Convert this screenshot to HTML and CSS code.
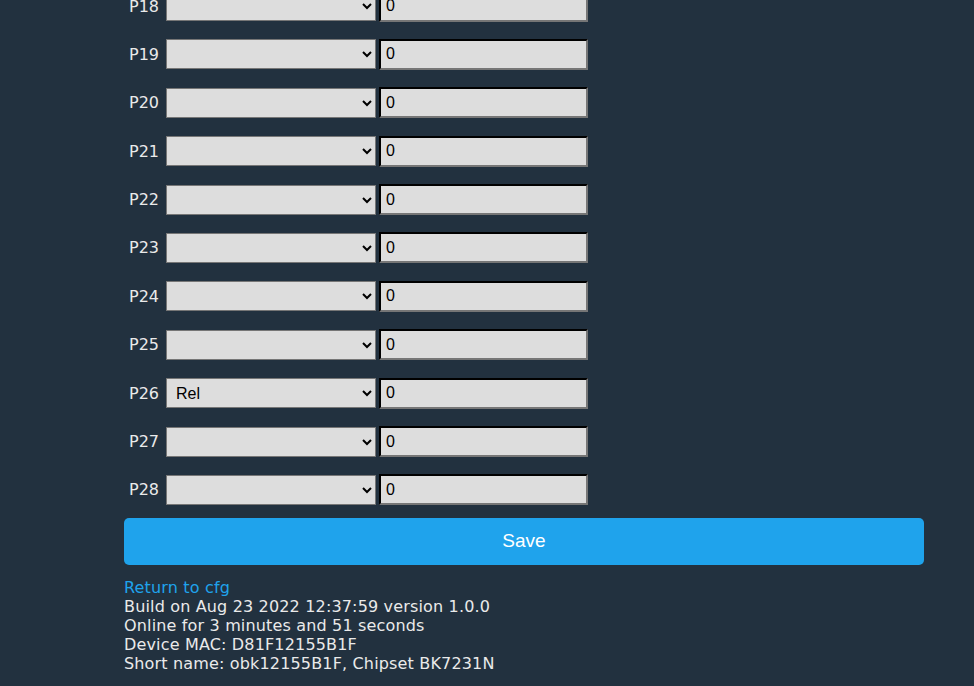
FILE: index.html
```html
<!DOCTYPE html>
<html lang="en">
<head>
    <meta charset="UTF-8">
    <meta name="viewport" content="width=device-width, initial-scale=1.0">
    <title>Configure pins</title>
    <link rel="stylesheet" href="styles.css">
</head>
<body>

<div class="main">
    <form class="pins">
        <div class="pin-row">
            <label class="pin-name">P18</label>
            <select class="pin-role"><option></option><option>Rel</option></select>
            <input class="pin-ch" type="text" value="0">
        </div>
        <div class="pin-row">
            <label class="pin-name">P19</label>
            <select class="pin-role"><option></option><option>Rel</option></select>
            <input class="pin-ch" type="text" value="0">
        </div>
        <div class="pin-row">
            <label class="pin-name">P20</label>
            <select class="pin-role"><option></option><option>Rel</option></select>
            <input class="pin-ch" type="text" value="0">
        </div>
        <div class="pin-row">
            <label class="pin-name">P21</label>
            <select class="pin-role"><option></option><option>Rel</option></select>
            <input class="pin-ch" type="text" value="0">
        </div>
        <div class="pin-row">
            <label class="pin-name">P22</label>
            <select class="pin-role"><option></option><option>Rel</option></select>
            <input class="pin-ch" type="text" value="0">
        </div>
        <div class="pin-row">
            <label class="pin-name">P23</label>
            <select class="pin-role"><option></option><option>Rel</option></select>
            <input class="pin-ch" type="text" value="0">
        </div>
        <div class="pin-row">
            <label class="pin-name">P24</label>
            <select class="pin-role"><option></option><option>Rel</option></select>
            <input class="pin-ch" type="text" value="0">
        </div>
        <div class="pin-row">
            <label class="pin-name">P25</label>
            <select class="pin-role"><option></option><option>Rel</option></select>
            <input class="pin-ch" type="text" value="0">
        </div>
        <div class="pin-row">
            <label class="pin-name">P26</label>
            <select class="pin-role"><option></option><option selected>Rel</option></select>
            <input class="pin-ch" type="text" value="0">
        </div>
        <div class="pin-row">
            <label class="pin-name">P27</label>
            <select class="pin-role"><option></option><option>Rel</option></select>
            <input class="pin-ch" type="text" value="0">
        </div>
        <div class="pin-row">
            <label class="pin-name">P28</label>
            <select class="pin-role"><option></option><option>Rel</option></select>
            <input class="pin-ch" type="text" value="0">
        </div>

        <button type="submit" class="btn">Save</button>
    </form>

    <div class="footer">
        <a href="cfg" class="link">Return to cfg</a><br>
        Build on Aug 23 2022 12:37:59 version 1.0.0<br>
        Online for 3 minutes and 51 seconds<br>
        Device MAC: D81F12155B1F<br>
        Short name: obk12155B1F, Chipset BK7231N
    </div>
</div>

</body>
</html>
```

FILE: styles.css
```css
html, body {
    margin: 0;
    padding: 0;
}

body {
    background-color: #22313f;
    color: #eaeaea;
    font-family: "DejaVu Sans", Verdana, sans-serif;
    font-size: 16px;
    overflow: hidden;
}

.main {
    width: 800px;
    margin-left: 124px;
    margin-top: -9.5px;
}

.pins {
    display: flex;
    flex-direction: column;
    gap: 17.4px;
}

.pin-row {
    display: flex;
    align-items: center;
    height: 31px;
}

.pin-name {
    width: 37px;
    padding-left: 5px;
    color: #eaeaea;
}

.pin-role {
    width: 210px;
    height: 30px;
    padding: 0 5px;
    background-color: #dddddd;
    border: 1px solid #767676;
    border-radius: 0;
    font-family: "Liberation Sans", Arial, sans-serif;
    font-size: 16px;
    color: #000;
}

.pin-ch {
    box-sizing: border-box;
    width: 209px;
    height: 31px;
    margin-left: 3px;
    padding: 0 5px;
    background-color: #dddddd;
    border: 2px inset #767676;
    border-top-color: #2a2a2a;
    border-left-color: #2a2a2a;
    font-family: "Liberation Sans", Arial, sans-serif;
    font-size: 16px;
    color: #000;
}

.btn {
    width: 800px;
    height: 47px;
    margin-top: -5px;
    background-color: #1fa3ec;
    color: #fff;
    border: none;
    border-radius: 5px;
    font-family: "Liberation Sans", Arial, sans-serif;
    font-size: 19px;
    cursor: pointer;
}

.footer {
    margin-top: 13px;
    line-height: 19px;
    letter-spacing: 0.16px;
}

.link {
    color: #1fa3ec;
    text-decoration: none;
}
```
